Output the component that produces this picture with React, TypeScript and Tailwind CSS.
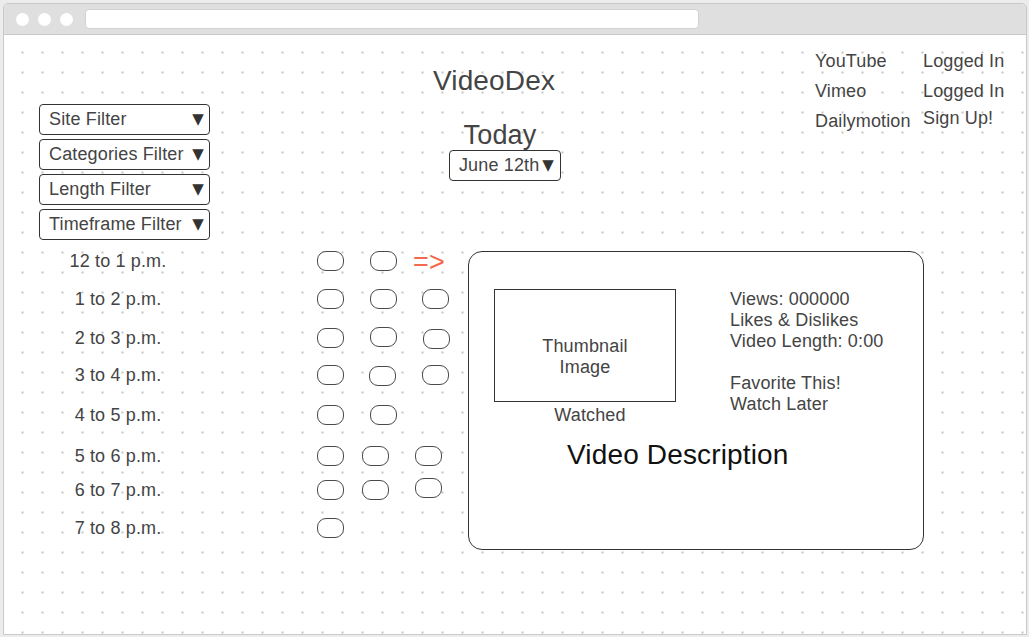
import React from "react";

const filters = ["Site Filter", "Categories Filter", "Length Filter", "Timeframe Filter"];

const sites = [
  { name: "YouTube", status: "Logged In", extra: "" },
  { name: "Vimeo", status: "Logged In", extra: "" },
  { name: "Dailymotion", status: "Sign Up!", extra: "-mt-[3px]" },
];

// each pill carries its own spacing, the wireframe isn't perfectly even
const slots = [
  { label: "12 to 1 p.m.", row: "mt-0", pills: ["", "ml-[26px]"], arrow: true },
  { label: "1 to 2 p.m.", row: "mt-[18px]", pills: ["", "ml-[26px]", "ml-[25px]"] },
  { label: "2 to 3 p.m.", row: "mt-[19px]", pills: ["", "ml-[26px] -mt-[1px]", "ml-[26px] mt-[1px]"] },
  { label: "3 to 4 p.m.", row: "mt-[17px]", pills: ["", "ml-[25px] mt-[1px]", "ml-[26px]"] },
  { label: "4 to 5 p.m.", row: "mt-[20px]", pills: ["", "ml-[26px]"] },
  { label: "5 to 6 p.m.", row: "mt-[21px]", pills: ["", "ml-[18px]", "ml-[26px]"] },
  { label: "6 to 7 p.m.", row: "mt-[14px]", pills: ["", "ml-[18px]", "ml-[26px] -mt-[2px]"] },
  { label: "7 to 8 p.m.", row: "mt-[18px]", pills: [""] },
];

const Caret = () => (
  <span className="font-['DejaVu_Sans',sans-serif] text-[15px] leading-none text-[#333]">▼</span>
);

const App = () => {
  return (
    <div className="w-[1029px] h-[637px] bg-[#ececec] pl-[3px] pr-[2px] pt-[3px] pb-[2px] font-['Liberation_Sans',Arial,sans-serif] text-[#444] tracking-[0.15px]">
      <div className="w-full h-full flex flex-col border border-[#c9c9c9] rounded-t-[5px] overflow-hidden">
        {/* Browser chrome */}
        <div className="h-[31px] shrink-0 bg-[#dfdfdf] border-b border-[#c9c9c9] flex items-center">
          <div className="flex gap-[9px] ml-[12px]">
            <span className="w-[13px] h-[13px] rounded-full bg-white" />
            <span className="w-[13px] h-[13px] rounded-full bg-white" />
            <span className="w-[13px] h-[13px] rounded-full bg-white" />
          </div>
          <div className="ml-[12px] w-[614px] h-[20px] bg-white rounded-[4px] border border-[#d2d2d2]" />
        </div>

        {/* Canvas */}
        <div className="flex-1 bg-white bg-[radial-gradient(circle,#c4c4c4_0.8px,transparent_1.2px)] bg-[length:20px_20px] bg-[position:8.5px_7.5px]">
          {/* Header */}
          <div className="flex items-start">
            <div className="ml-[35px] mt-[69px] w-[171px] flex flex-col gap-[4px]">
              {filters.map((f) => (
                <div
                  key={f}
                  className="h-[31px] flex items-center justify-between bg-white border border-[#333] rounded-[4px] pl-[9px] pr-[5px] text-[18px]"
                >
                  <span>{f}</span>
                  <Caret />
                </div>
              ))}
            </div>

            <div className="w-[568px] flex flex-col items-center">
              <div className="mt-[30px] text-[28px] leading-[32px]">VideoDex</div>
              <div className="mt-[25px] ml-[12px] text-[27px] leading-none">Today</div>
              <div className="mt-[1px] ml-[22px] h-[31px] flex items-center gap-[3px] bg-white border border-[#333] rounded-[4px] pl-[9px] pr-[6px] text-[18px]">
                <span>June 12th</span>
                <Caret />
              </div>
            </div>

            <div className="ml-[37px] mt-[11px] grid grid-cols-[108px_auto] text-[18px] leading-[30px]">
              {sites.map((s) => (
                <React.Fragment key={s.name}>
                  <span>{s.name}</span>
                  <span className={s.extra}>{s.status}</span>
                </React.Fragment>
              ))}
            </div>
          </div>

          {/* Schedule + detail card */}
          <div className="flex items-start mt-[11px]">
            <div className="w-[464px] shrink-0 flex flex-col">
              {slots.map((s) => (
                <div key={s.label} className={`flex items-start h-[20px] ${s.row}`}>
                  <span className="ml-[39px] w-[150px] text-center text-[18px] leading-[20px]">{s.label}</span>
                  <div className="ml-[124px] flex items-start">
                    {s.pills.map((p, i) => (
                      <span
                        key={i}
                        className={`w-[27px] h-[20px] shrink-0 bg-white border-[1.5px] border-[#4a4a4a] rounded-[9px] ${p}`}
                      />
                    ))}
                    {s.arrow && (
                      <span className="ml-[16px] text-[27px] leading-[22px] text-[#f4694b]">=&gt;</span>
                    )}
                  </div>
                </div>
              ))}
            </div>

            <div className="w-[456px] h-[299px] shrink-0 bg-white border border-[#333] rounded-[14px] pl-[25px] pt-[37px] flex flex-col text-[18px]">
              <div className="flex items-start">
                <div className="w-[182px] flex flex-col">
                  <div className="h-[113px] border border-[#333] pt-[46px] text-center leading-[21px]">
                    Thumbnail
                    <br />
                    Image
                  </div>
                  <div className="mt-[3px] pl-[10px] text-center leading-[21px]">Watched</div>
                </div>
                <div className="ml-[54px] flex flex-col leading-[21px]">
                  <span>Views: 000000</span>
                  <span>Likes &amp; Dislikes</span>
                  <span>Video Length: 0:00</span>
                  <span className="h-[21px]" />
                  <span>Favorite This!</span>
                  <span>Watch Later</span>
                </div>
              </div>
              <div className="mt-[13px] ml-[73px] text-[28px] leading-[32px] text-[#111]">Video Description</div>
            </div>
          </div>
        </div>
      </div>
    </div>
  );
};

export default App;
